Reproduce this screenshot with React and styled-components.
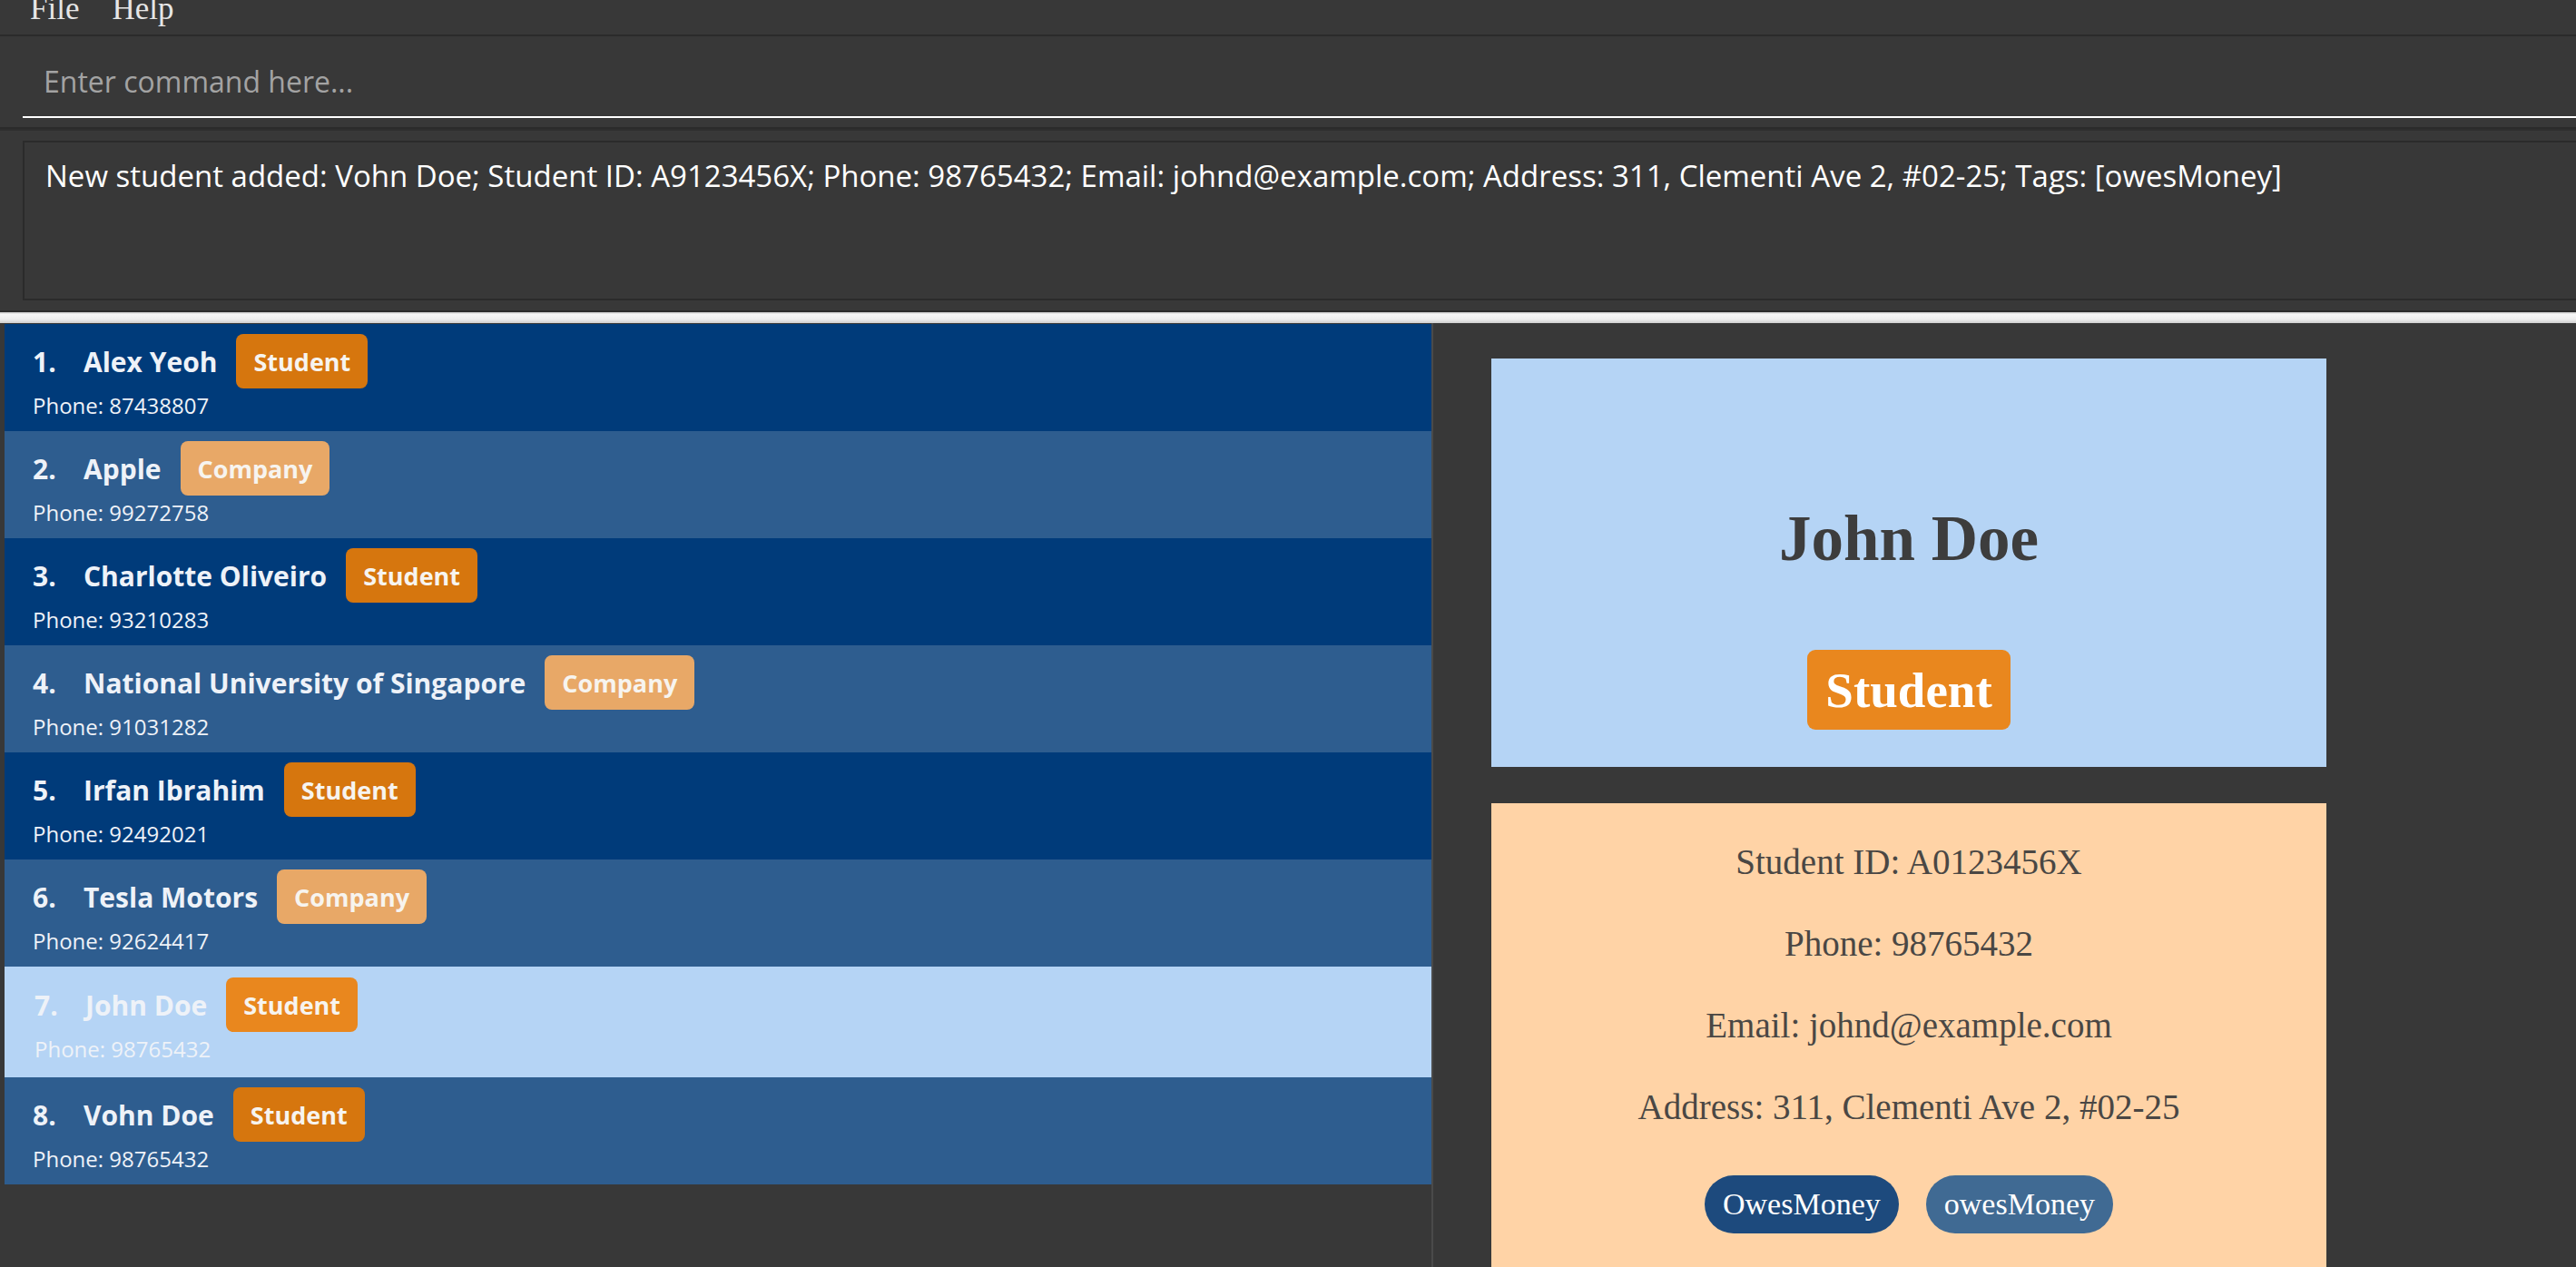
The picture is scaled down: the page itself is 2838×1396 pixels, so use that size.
import styled, { createGlobalStyle } from "styled-components";

const GlobalStyle = createGlobalStyle`
  html, body {
    margin: 0;
    padding: 0;
    background: #383838;
  }
  body {
    font-family: "Open Sans", "Noto Sans", sans-serif;
    overflow: hidden;
  }
`;

const persons = [
  { name: "Alex Yeoh", phone: "87438807", role: "Student" },
  { name: "Apple", phone: "99272758", role: "Company" },
  { name: "Charlotte Oliveiro", phone: "93210283", role: "Student" },
  { name: "National University of Singapore", phone: "91031282", role: "Company" },
  { name: "Irfan Ibrahim", phone: "92492021", role: "Student" },
  { name: "Tesla Motors", phone: "92624417", role: "Company" },
  { name: "John Doe", phone: "98765432", role: "Student", selected: true },
  { name: "Vohn Doe", phone: "98765432", role: "Student" },
];

function App() {
  return (
    <Window>
      <GlobalStyle />
      <MenuBar>
        <MenuItem>File</MenuItem>
        <MenuItem>Help</MenuItem>
      </MenuBar>

      <CommandPane>
        <CommandInput placeholder="Enter command here..." />
      </CommandPane>

      <ResultPane>
        <ResultBox>
          New student added: Vohn Doe; Student ID: A9123456X; Phone: 98765432;
          Email: johnd@example.com; Address: 311, Clementi Ave 2, #02-25; Tags:
          [owesMoney]
        </ResultBox>
      </ResultPane>

      <Splitter />

      <Main>
        <ListPane>
          {persons.map((p, i) => (
            <Row key={p.name} $index={i} $selected={p.selected}>
              <Header>
                <Index>{i + 1}.</Index>
                <Name>{p.name}</Name>
                <RoleTag $role={p.role} $selected={p.selected}>
                  {p.role}
                </RoleTag>
              </Header>
              <Phone>Phone: {p.phone}</Phone>
            </Row>
          ))}
        </ListPane>

        <DetailPane>
          <NameCard>
            <BigName>John Doe</BigName>
            <BigTag>Student</BigTag>
          </NameCard>
          <InfoCard>
            <InfoLine>Student ID: A0123456X</InfoLine>
            <InfoLine>Phone: 98765432</InfoLine>
            <InfoLine>Email: johnd@example.com</InfoLine>
            <InfoLine>Address: 311, Clementi Ave 2, #02-25</InfoLine>
            <Pills>
              <Pill $dark>OwesMoney</Pill>
              <Pill>owesMoney</Pill>
            </Pills>
          </InfoCard>
        </DetailPane>
      </Main>
    </Window>
  );
}

export default App;

const Window = styled.div`
  height: 100vh;
  display: flex;
  flex-direction: column;
  background: #383838;
  overflow: hidden;
`;

const MenuBar = styled.div`
  height: 38px;
  flex-shrink: 0;
  display: flex;
  gap: 36px;
  padding-left: 33px;
  border-bottom: 2px solid #2b2b2b;
  overflow: hidden;
`;

const MenuItem = styled.div`
  font-family: "Liberation Serif", serif;
  font-size: 35px;
  line-height: 35px;
  margin-top: -8px;
  color: #e6e6e6;
`;

const CommandPane = styled.div`
  height: 102px;
  flex-shrink: 0;
  box-sizing: border-box;
  padding: 0 0 10px 25px;
  display: flex;
  align-items: flex-end;
  border-bottom: 2px solid #2b2b2b;
`;

const CommandInput = styled.input`
  width: 100%;
  height: 90px;
  box-sizing: border-box;
  padding: 10px 0 0 23px;
  background: transparent;
  border: none;
  border-bottom: 2px solid #ffffff;
  outline: none;
  font-family: "Open Sans", "Noto Sans", sans-serif;
  font-size: 32px;
  color: #ffffff;

  &::placeholder {
    color: #a3a3a3;
  }
`;

const ResultPane = styled.div`
  height: 202px;
  flex-shrink: 0;
  box-sizing: border-box;
  padding: 11px 0 0 25px;
  border-top: 2px solid #2e2e2e;
  border-bottom: 2px solid #2b2b2b;
`;

const ResultBox = styled.div`
  height: 176px;
  box-sizing: border-box;
  padding: 14px 0 0 23px;
  border: 2px solid #2b2b2b;
  border-right: none;
  font-size: 33px;
  color: #ffffff;
  white-space: nowrap;
`;

const Splitter = styled.div`
  height: 12px;
  flex-shrink: 0;
  background: linear-gradient(#c6c6c6 0, #f6f6f6 20%, #ededed 65%, #cfcfcf 100%);
`;

const Main = styled.div`
  flex: 1;
  display: flex;
  min-height: 0;
`;

const ListPane = styled.div`
  width: 1579px;
  flex-shrink: 0;
  box-sizing: border-box;
  padding: 1px 0 0 5px;
  border-right: 2px solid #4a4a4a;
`;

const rowBg = ({ $selected, $index }) =>
  $selected ? "#b5d4f5" : $index % 2 === 0 ? "#003b7a" : "#2e5d8f";

const Row = styled.div`
  height: ${(p) => (p.$selected ? 122 : 118)}px;
  box-sizing: border-box;
  padding: ${(p) => (p.$selected ? "12px 0 0 33px" : "11px 0 0 31px")};
  background: ${rowBg};
  color: #eef2f8;
`;

const Header = styled.div`
  height: 60px;
  display: flex;
  align-items: center;
`;

const Index = styled.span`
  width: 56px;
  font-size: 30px;
  font-weight: 700;
`;

const Name = styled.span`
  font-size: 30px;
  font-weight: 700;
  margin-right: 21px;
`;

const tagBg = ({ $role, $selected }) =>
  $role === "Company" ? "#e8a867" : $selected ? "#e9871e" : "#d6760e";

const RoleTag = styled.span`
  height: 60px;
  display: flex;
  align-items: center;
  padding: 0 19px;
  border-radius: 8px;
  background: ${tagBg};
  font-size: 27px;
  font-weight: 700;
  color: #f7f4ef;
`;

const Phone = styled.div`
  margin-top: 4px;
  font-size: 24px;
  line-height: 30px;
`;

const DetailPane = styled.div`
  flex: 1;
  padding: 39px 0 0 64px;
  display: flex;
  flex-direction: column;
  gap: 40px;
`;

const NameCard = styled.div`
  width: 920px;
  height: 450px;
  box-sizing: border-box;
  padding-top: 157px;
  display: flex;
  flex-direction: column;
  align-items: center;
  gap: 82px;
  background: #b5d4f5;
`;

const BigName = styled.div`
  font-family: "Liberation Serif", serif;
  font-size: 71px;
  line-height: 82px;
  font-weight: 700;
  color: #3d3d3d;
`;

const BigTag = styled.div`
  height: 88px;
  display: flex;
  align-items: center;
  padding: 0 20px;
  border-radius: 9px;
  background: #e9871e;
  font-family: "Liberation Serif", serif;
  font-size: 55px;
  font-weight: 700;
  color: #ffffff;
`;

const InfoCard = styled.div`
  width: 920px;
  flex: 1;
  box-sizing: border-box;
  padding-top: 20px;
  display: flex;
  flex-direction: column;
  align-items: center;
  background: #ffd3a6;
`;

const InfoLine = styled.div`
  font-family: "Liberation Serif", serif;
  font-size: 39px;
  line-height: 90px;
  color: #4a4744;
`;

const Pills = styled.div`
  margin-top: 30px;
  display: flex;
  gap: 30px;
`;

const Pill = styled.div`
  height: 64px;
  display: flex;
  align-items: center;
  padding: 0 20px;
  border-radius: 32px;
  background: ${(p) => (p.$dark ? "#1d4a7d" : "#406a93")};
  font-family: "Liberation Serif", serif;
  font-size: 34px;
  color: #ffffff;
`;
